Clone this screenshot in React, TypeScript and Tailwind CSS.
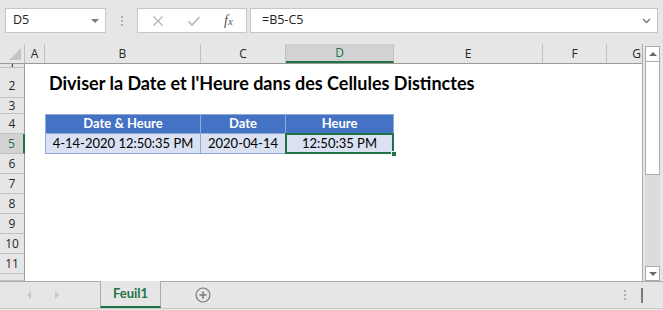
import React from 'react'

const cols = [
  { key: 'A', w: 'w-[20px]' },
  { key: 'B', w: 'w-[156px]' },
  { key: 'C', w: 'w-[85px]' },
  { key: 'D', w: 'w-[108px]' },
  { key: 'E', w: 'w-[149px]' },
  { key: 'F', w: 'w-[64px]' },
  { key: 'G', w: 'w-[60px]' },
]

const rows = [
  { n: '1', h: 'h-[4px]' },
  { n: '2', h: 'h-[30px]' },
  { n: '3', h: 'h-[16px]' },
  { n: '4', h: 'h-[20px]' },
  { n: '5', h: 'h-[20px]' },
  { n: '6', h: 'h-[20px]' },
  { n: '7', h: 'h-[20px]' },
  { n: '8', h: 'h-[20px]' },
  { n: '9', h: 'h-[20px]' },
  { n: '10', h: 'h-[20px]' },
  { n: '11', h: 'h-[20px]' },
  { n: '', h: 'h-[7px]' },
]

const ui = { fontFamily: '"Open Sans", "Liberation Sans", sans-serif' }
const cell = { fontFamily: 'Lato, "Liberation Sans", sans-serif' }

const TopBar = () => (
  <div className='h-[44px] bg-[#e6e6e6] flex items-start pt-[8px] pl-[5px] pr-[5px]' style={ui}>
    <div className='w-[101px] h-[25px] bg-white border border-[#c6c6c6] flex items-center justify-between pl-[7px] pr-[6px]'>
      <span className='text-[12.5px] text-[#222]'>D5</span>
      <span className='w-0 h-0 border-l-[4px] border-r-[4px] border-t-[4px] border-l-transparent border-r-transparent border-t-[#7a7a7a]' />
    </div>
    <div className='w-[31px] h-[25px] flex flex-col items-center justify-center gap-[2px]'>
      <span className='w-[2px] h-[2px] bg-[#b0b0b0]' />
      <span className='w-[2px] h-[2px] bg-[#b0b0b0]' />
      <span className='w-[2px] h-[2px] bg-[#b0b0b0]' />
    </div>
    <div className='w-[110px] h-[25px] bg-white border border-[#c6c6c6] flex items-center'>
      <svg width='12' height='12' viewBox='0 0 12 12' className='ml-[14px]'>
        <path d='M1.5 1.5 L10.5 10.5 M10.5 1.5 L1.5 10.5' stroke='#b5b5b5' strokeWidth='1.3' />
      </svg>
      <svg width='14' height='12' viewBox='0 0 14 12' className='ml-[23px]'>
        <path d='M1.5 6.5 L5 10 L12.5 2' stroke='#b5b5b5' strokeWidth='1.6' fill='none' />
      </svg>
      <span className='ml-[23px] text-[14px] italic text-[#555]' style={{ fontFamily: '"Liberation Serif", serif' }}>
        f<span className='text-[11px]'>x</span>
      </span>
    </div>
    <div className='flex-1 ml-[3px] h-[25px] bg-white border border-[#c6c6c6] flex items-center justify-between pl-[11px] pr-[6px]'>
      <span className='text-[12.5px] text-[#222]'>=B5-C5</span>
      <svg width='9' height='6' viewBox='0 0 9 6'>
        <path d='M1 1 L4.5 4.5 L8 1' stroke='#7a7a7a' strokeWidth='1.5' fill='none' />
      </svg>
    </div>
  </div>
)

const ColumnHeader = () => (
  <div className='h-[20px] flex border-b border-[#9b9b9b] bg-[#e6e6e6] overflow-hidden' style={ui}>
    <div className='w-[25px] shrink-0 relative border-r border-[#c0c0c0]'>
      <svg width='14' height='14' viewBox='0 0 14 14' className='absolute right-[2px] bottom-[2px]'>
        <path d='M13 1 L13 13 L1 13 Z' fill='#c4c4c4' />
      </svg>
    </div>
    {cols.map((c) => (
      <div
        key={c.key}
        className={`${c.w} shrink-0 flex items-center justify-center text-[12px] border-r border-[#c0c0c0] ${
          c.key === 'D' ? 'bg-[#d2d2d2] text-[#217346] border-b-2 border-b-[#217346]' : 'text-[#262626]'
        }`}
      >
        {c.key}
      </div>
    ))}
  </div>
)

const Title = () => (
  <div className='absolute left-[4px] bottom-[4px] whitespace-nowrap text-[18px] leading-[22px] font-bold text-black' style={cell}>
    Diviser la Date et l'Heure dans des Cellules Distinctes
  </div>
)

const headerCells: Record<string, string> = { B: 'Date & Heure', C: 'Date', D: 'Heure' }
const dataCells: Record<string, string> = { B: '4-14-2020 12:50:35 PM', C: '2020-04-14', D: '12:50:35 PM' }

const Sheet = () => (
  <div className='flex flex-col flex-1 bg-white overflow-hidden'>
    {rows.map((r, i) => (
      <div key={i} className={`${r.h} flex`}>
        <div
          className={`w-[25px] shrink-0 flex justify-center text-[12px] border-b border-[#c0c0c0] overflow-hidden ${
            r.n === '5'
              ? 'bg-[#d2d2d2] text-[#217346] border-r-2 border-r-[#217346]'
              : 'bg-[#e6e6e6] text-[#262626] border-r border-r-[#9b9b9b]'
          } ${r.n === '2' ? 'items-end pb-[3px] leading-[16px]' : r.n === '1' ? 'items-end leading-[8px]' : 'items-center leading-[14px]'}`}
          style={ui}
        >
          {r.n}
        </div>
        {cols.map((c) => {
          const inTable = (r.n === '4' || r.n === '5') && (c.key === 'B' || c.key === 'C' || c.key === 'D')
          if (!inTable) {
            return (
              <div key={c.key} className={`${c.w} shrink-0 relative`}>
                {r.n === '2' && c.key === 'B' && <Title />}
              </div>
            )
          }
          const head = r.n === '4'
          return (
            <div
              key={c.key}
              className={`${c.w} shrink-0 relative flex items-center justify-center text-[13px] border-r border-b ${
                c.key === 'B' ? 'border-l' : ''
              } ${
                head
                  ? 'bg-[#4472c4] text-white font-bold border-t border-[#8eaadb]'
                  : 'bg-[#d9e1f2] text-black border-[#8eaadb]'
              }`}
              style={cell}
            >
              {head ? headerCells[c.key] : dataCells[c.key]}
              {!head && c.key === 'D' && (
                <>
                  <div className='absolute -left-px -top-px -right-px -bottom-px border-2 border-[#217346]' />
                  <div className='absolute -right-[4px] -bottom-[4px] w-[6px] h-[6px] bg-[#217346] border border-white' />
                </>
              )}
            </div>
          )
        })}
      </div>
    ))}
  </div>
)

const Scrollbar = () => (
  <div className='w-[20px] bg-[#e6e6e6] flex justify-end pr-[3px] pt-[2px]'>
    <div className='w-[15px] flex flex-col bg-[#dcdcdc]'>
      <div className='h-[16px] bg-white border border-[#ababab] flex items-center justify-center'>
        <span className='w-0 h-0 border-l-[4px] border-r-[4px] border-b-[4px] border-l-transparent border-r-transparent border-b-[#6a6a6a]' />
      </div>
      <div className='h-[113px] bg-white border border-[#ababab] border-t-0' />
      <div className='flex-1' />
      <div className='h-[15px] bg-white border border-[#ababab] flex items-center justify-center'>
        <span className='w-0 h-0 border-l-[4px] border-r-[4px] border-t-[4px] border-l-transparent border-r-transparent border-t-[#6a6a6a]' />
      </div>
    </div>
  </div>
)

const TabBar = () => (
  <div className='h-[28px] bg-[#e6e6e6] border-t border-[#ababab] border-b border-b-[#c8c8c8] flex items-stretch' style={ui}>
    <div className='w-[100px] flex items-center pl-[27px] gap-[24px]'>
      <span className='w-0 h-0 border-t-[4px] border-b-[4px] border-r-[4px] border-t-transparent border-b-transparent border-r-[#c8c8c8]' />
      <span className='w-0 h-0 border-t-[4px] border-b-[4px] border-l-[4px] border-t-transparent border-b-transparent border-l-[#c8c8c8]' />
    </div>
    <div className='w-[61px] -mt-px bg-[#e6e6e6] border-l border-r border-[#ababab] border-b-2 border-b-[#217346] flex items-center justify-center text-[13px] font-bold text-[#217346]' style={cell}>
      Feuil1
    </div>
    <div className='w-[84px] flex items-center justify-center'>
      <svg width='16' height='16' viewBox='0 0 16 16'>
        <circle cx='8' cy='8' r='7' fill='none' stroke='#7a7a7a' strokeWidth='1.2' />
        <path d='M8 4.5 V11.5 M4.5 8 H11.5' stroke='#7a7a7a' strokeWidth='1.6' />
      </svg>
    </div>
    <div className='flex-1' />
    <div className='flex flex-col justify-center gap-[2px] mr-[15px]'>
      <span className='w-[2px] h-[2px] bg-[#b0b0b0]' />
      <span className='w-[2px] h-[2px] bg-[#b0b0b0]' />
      <span className='w-[2px] h-[2px] bg-[#b0b0b0]' />
    </div>
    <div className='flex items-center mr-[20px]'>
      <span className='w-[2px] h-[15px] bg-[#7a7a7a]' />
    </div>
  </div>
)

const App = () => {
  return (
    <main className='w-[663px] h-[310px] bg-[#e6e6e6] overflow-hidden flex flex-col'>
      <TopBar />
      <div className='h-[237px] flex'>
        <div className='w-[643px] flex flex-col border-r border-[#ababab] overflow-hidden'>
          <ColumnHeader />
          <Sheet />
        </div>
        <Scrollbar />
      </div>
      <TabBar />
    </main>
  )
}

export default App
